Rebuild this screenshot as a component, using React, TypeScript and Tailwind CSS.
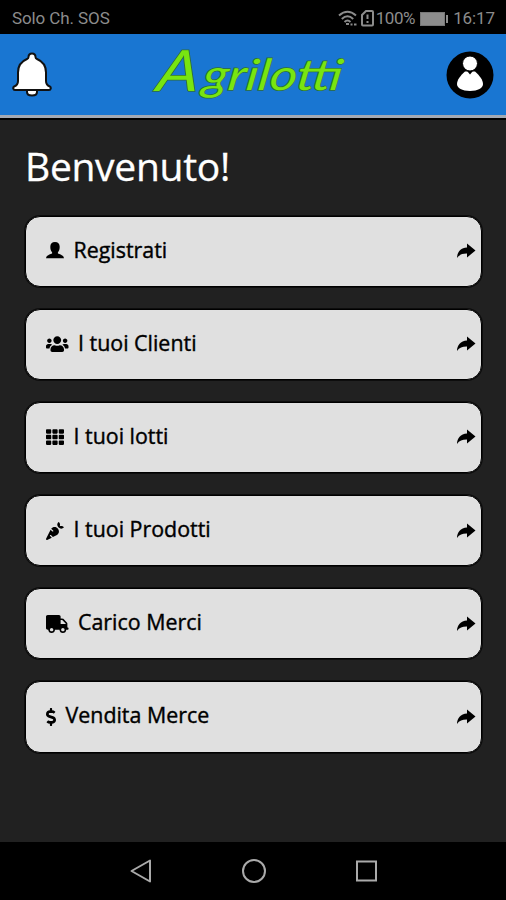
import React from 'react';
import { FaCarrot, FaDollarSign, FaTh, FaTruck, FaUsers } from 'react-icons/fa';

const PersonIcon: React.FC = () => (
    <svg viewBox="0 0 18 18" className="w-[18px] h-[18px]" fill="currentColor">
        <path d="M9 0c3 0 4.700 1.700 4.700 4.800 0 2.300-.6 4.300-1.800 5.400v1.300c2.600 1.200 5.800 1.700 6.100 4.700H0c.3-3 3.500-3.500 6.100-4.700v-1.300C4.900 9.100 4.300 7.100 4.300 4.800 4.300 1.700 6 0 9 0Z" />
    </svg>
);

const ForwardIcon: React.FC = () => (
    <svg viewBox="0 0 20 16" className="w-5 h-4" fill="currentColor">
        <path d="M11 .5 19.500 7.500 11 14.500V10.600C6.500 10.500 3.500 11.500 1 15 1.200 9 4.500 4.900 11 4.500Z" />
    </svg>
);

const menu = [
    { label: 'Registrati', icon: <PersonIcon /> },
    { label: 'I tuoi Clienti', icon: <FaUsers className="w-[22.5px] h-[18px]" /> },
    { label: 'I tuoi lotti', icon: <FaTh className="w-[18px] h-[18px]" /> },
    { label: 'I tuoi Prodotti', icon: <FaCarrot className="w-[18px] h-[18px]" /> },
    { label: 'Carico Merci', icon: <FaTruck className="w-[22.5px] h-[18px]" /> },
    { label: 'Vendita Merce', icon: <FaDollarSign className="w-[10px] h-[18px]" /> },
];

const StatusBar: React.FC = () => (
    <div className="h-[34px] bg-black text-[#8c8c8c] pl-3 pr-[11px] flex items-center justify-between font-[Roboto,sans-serif] text-[17px] pt-[3px]">
        <span className="tracking-[-0.1px]">Solo Ch. SOS</span>
        <div className="flex items-center">
            <svg width="20" height="17" viewBox="0 0 20 17" fill="none" stroke="currentColor" strokeWidth="2">
                <path d="M1 5.500Q9.500-2 18 5.500M3.800 9Q9.500 3.600 15.200 9M6.500 12Q9.500 9 12.500 12" />
                <path d="M8 14h3M12.500 14.500h2M16 14.500h2.500" />
            </svg>
            <svg width="13" height="17" viewBox="0 0 13 17" className="ml-[3px]" fill="none" stroke="currentColor" strokeWidth="2">
                <path d="M5 1h6a1 1 0 0 1 1 1v12.500a1 1 0 0 1-1 1H2a1 1 0 0 1-1-1V5Z" />
                <path d="M6.500 4.500v4.500M6.500 11v2" />
            </svg>
            <span className="ml-[2px] tracking-[-0.4px]">100%</span>
            <div className="ml-[5px] w-[25px] h-[14px] border border-[#777] bg-[#8c8c8c]" />
            <div className="w-[2px] h-[8px] bg-[#8c8c8c] ml-[1px]" />
            <span className="ml-[5px] tracking-[-0.1px]">16:17</span>
        </div>
    </div>
);

const Header: React.FC = () => (
    <header className="h-[84px] bg-[#1976d2] border-b-[3px] border-[#a3a9b3] shadow-[0_2px_0_#000] px-3 flex items-center justify-between">
        <svg width="40" height="46" viewBox="0 0 40 46" fill="#fff" stroke="#111" strokeWidth="2" strokeLinejoin="round">
            <path d="M15 38v2c0 2 2 3.500 5 3.500s5-1.500 5-3.500V38Z" />
            <path d="M20 1.500c-2.200 0-3.500 1.600-3.500 3.500 0 1-.5 1.600-1.500 2C9 9.500 6 14 6 20.500V29c0 2.500-1 4.500-3.800 5.500-1.600.8-1.200 3.500.8 3.500h34c2 0 2.400-2.700.8-3.500C35 33.500 34 31.500 34 29v-8.500C34 14 31 9.500 25 7c-1-.4-1.500-1-1.500-2 0-1.900-1.300-3.500-3.500-3.500Z" />
        </svg>
        <svg width="200" height="78" viewBox="0 0 200 78" className="overflow-visible font-[Lato,sans-serif] italic" fill="#78e510" stroke="#2f6d3a" strokeWidth="1.500" paintOrder="stroke">
            <g transform="translate(8 0) skewX(-8)">
                <text x="6" y="55" fontSize="57" textLength="42" lengthAdjust="spacingAndGlyphs">A</text>
                <text x="52" y="54" fontSize="43" textLength="139" lengthAdjust="spacingAndGlyphs">grilotti</text>
            </g>
        </svg>
        <svg width="48" height="48" viewBox="0 0 48 48">
            <circle cx="24" cy="24" r="23.500" fill="#000" />
            <path d="M19 20.500h10c4.500 4 8 8.500 8 12.500 0 4-5 7-13 7s-13-3-13-7c0-4 3.500-8.500 8-12.500Z" fill="#fff" />
            <path d="M19.500 18 24 23.500 28.500 18Z" fill="#000" />
            <circle cx="24" cy="12.500" r="7.500" fill="#fff" stroke="#000" />
        </svg>
    </header>
);

const NavBar: React.FC = () => (
    <nav className="h-[58px] bg-black flex items-center justify-center gap-[90px]">
        <svg width="24" height="26" viewBox="0 0 24 26" fill="none" stroke="#aaa" strokeWidth="2" strokeLinejoin="round">
            <path d="M22 2.500v21L3.500 13Z" />
        </svg>
        <svg width="24" height="26" viewBox="0 0 24 26" fill="none" stroke="#aaa" strokeWidth="2">
            <circle cx="12" cy="13" r="11" />
        </svg>
        <svg width="22" height="26" viewBox="0 0 22 26" fill="none" stroke="#aaa" strokeWidth="2">
            <rect x="1" y="3.500" width="19" height="19" />
        </svg>
    </nav>
);

export default function App() {
    return (
        <div className="w-full h-[900px] bg-[#212121] flex flex-col font-['Open_Sans',sans-serif]">
            <StatusBar />
            <Header />
            <main className="flex-1 px-[25px] pt-[21px]">
                <h1 className="text-white text-[39px] leading-[54px] tracking-[-0.3px] [-webkit-text-stroke:0.3px_white]">Benvenuto!</h1>
                <ul className="mt-[22.500px] flex flex-col gap-[22px]">
                    {menu.map(item => (
                        <li key={item.label} className="h-[71.2px] w-[457px] rounded-[15px] bg-[#e0e0e0] border border-black ring-1 ring-black/60 flex items-center pl-[20px] pr-[5px] text-black">
                            <span>{item.icon}</span>
                            <span className="ml-[9.500px] text-[21.400px] [-webkit-text-stroke:0.4px_black] flex-1 pb-[3px]">{item.label}</span>
                            <ForwardIcon />
                        </li>
                    ))}
                </ul>
            </main>
            <NavBar />
        </div>
    );
}
